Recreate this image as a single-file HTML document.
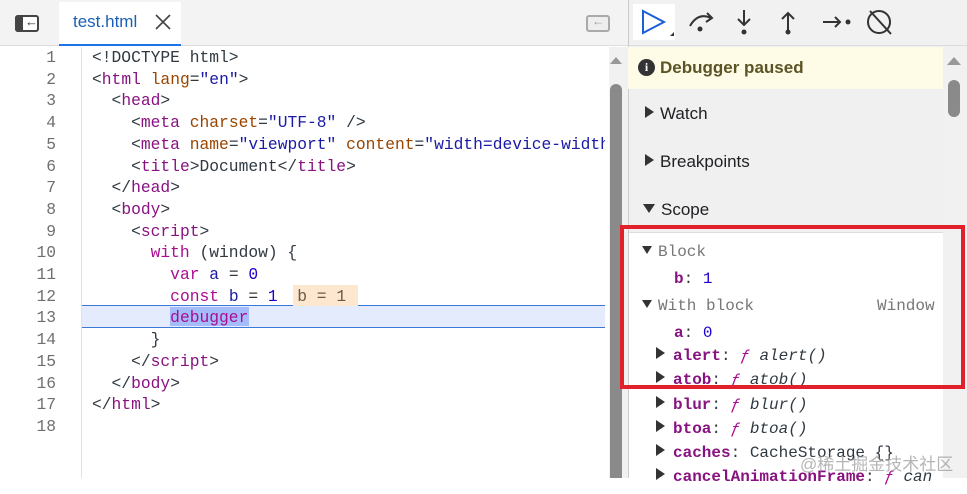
<!DOCTYPE html>
<html><head><style>
*{margin:0;padding:0;box-sizing:border-box}
body{width:967px;height:478px;overflow:hidden;background:#fff;font-family:"Liberation Sans",sans-serif;position:relative}
.abs{position:absolute}
.code{font-family:"Liberation Mono",monospace;font-size:16.3px;white-space:pre;line-height:21.7px;color:#303942}
.ln{position:absolute;left:0;width:56px;text-align:right;color:#6f6f6f}
.t{color:#881280}.a{color:#994500}.s{color:#1a1aa6}.k{color:#aa0d91}.n{color:#1c00cf}
.sec{position:absolute;left:628px;width:315px;font-size:17px;color:#202124}
.tri{display:inline-block;width:0;height:0;border-top:6px solid transparent;border-bottom:6px solid transparent;border-left:9px solid #333;margin-right:6px;vertical-align:1px}
.trd{display:inline-block;width:0;height:0;border-left:6px solid transparent;border-right:6px solid transparent;border-top:9px solid #333;margin-right:6px;vertical-align:2px}
.p{color:#881280;font-weight:bold}
.f{font-style:italic}
</style></head><body>
<div class="abs" style="left:0;top:0;width:628px;height:46px;background:#f3f3f3;border-bottom:1px solid #ddd"></div>
<div class="abs" style="left:15px;top:15px;width:24px;height:17px;border:2px solid #444;border-radius:3px;background:#fff"></div>
<div class="abs" style="left:15px;top:15px;width:8px;height:17px;background:#444;border-radius:3px 0 0 3px"></div>
<div class="abs" style="left:25px;top:14px;font-size:13px;color:#333">←</div>
<div class="abs" style="left:59px;top:2px;width:122px;height:44px;background:#fff;border-bottom:2px solid #1a73e8"></div>
<div class="abs" style="left:73px;top:12px;font-size:17px;color:#1a5fb4">test.html</div>
<svg class="abs" style="left:154px;top:13px" width="18" height="18" stroke="#444" stroke-width="1.6"><path d="M2 2 L16 16 M16 2 L2 16"/></svg>
<div class="abs" style="left:586px;top:15px;width:24px;height:17px;border:2px solid #aaa;border-radius:3px;background:#eee"></div>
<div class="abs" style="left:592px;top:14px;font-size:12px;color:#999">←</div>
<div class="abs" style="left:81px;top:47px;width:1px;height:431px;background:#dde3ea"></div>
<div class="abs" style="left:82px;top:305px;width:523px;height:23px;background:#e3ebfd;border-top:1px solid #3b78d8;border-bottom:1px solid #3b78d8"></div>
<div class="abs" style="left:170px;top:307px;width:79px;height:19px;background:#a4bdfa"></div>
<div class="abs" style="left:293px;top:285px;width:65px;height:21px;background:#fde7cf"></div>
<div class="code abs" style="left:0;top:47px;width:610px">
<div class="ln" style="top:0">1</div><div class="ln" style="top:21.7px">2</div><div class="ln" style="top:43.4px">3</div><div class="ln" style="top:65.1px">4</div><div class="ln" style="top:86.8px">5</div><div class="ln" style="top:108.5px">6</div><div class="ln" style="top:130.2px">7</div><div class="ln" style="top:151.9px">8</div><div class="ln" style="top:173.6px">9</div><div class="ln" style="top:195.3px">10</div><div class="ln" style="top:217px">11</div><div class="ln" style="top:238.7px">12</div><div class="ln" style="top:260.4px">13</div><div class="ln" style="top:282.1px">14</div><div class="ln" style="top:303.8px">15</div><div class="ln" style="top:325.5px">16</div><div class="ln" style="top:347.2px">17</div><div class="ln" style="top:368.9px">18</div>
<div style="position:absolute;left:92px;top:0;width:513px;overflow:hidden">&lt;!DOCTYPE html&gt;
&lt;<span class="t">html</span> <span class="a">lang</span>=<span class="s">"en"</span>&gt;
  &lt;<span class="t">head</span>&gt;
    &lt;<span class="t">meta</span> <span class="a">charset</span>=<span class="s">"UTF-8"</span> /&gt;
    &lt;<span class="t">meta</span> <span class="a">name</span>=<span class="s">"viewport"</span> <span class="a">content</span>=<span class="s">"width=device-width"</span>
    &lt;<span class="t">title</span>&gt;Document&lt;/<span class="t">title</span>&gt;
  &lt;/<span class="t">head</span>&gt;
  &lt;<span class="t">body</span>&gt;
    &lt;<span class="t">script</span>&gt;
      <span class="k">with</span> (window) {
        <span class="k">var</span> <span class="s">a</span> = <span class="n">0</span>
        <span class="k">const</span> <span class="s">b</span> = <span class="n">1</span>  <span style="color:#6b5a4a">b = 1</span>
        <span class="k">debugger</span>
      }
    &lt;/<span class="t">script</span>&gt;
  &lt;/<span class="t">body</span>&gt;
&lt;/<span class="t">html</span>&gt;
</div></div>
<div class="abs" style="left:609px;top:47px;width:19px;height:431px;background:#f1f1f1"></div>
<div class="abs" style="left:610px;top:84px;width:12px;height:394px;background:#8a8a8a;border-radius:6px 6px 0 0"></div>
<div class="abs" style="left:610px;top:57px;width:0;height:0;border-left:6px solid transparent;border-right:6px solid transparent;border-bottom:7px solid #999"></div>
<div class="abs" style="left:628px;top:0;width:339px;height:46px;background:#f1f1f1;border-left:1px solid #ccc;border-bottom:1px solid #ddd"></div>
<div class="abs" style="left:633px;top:4px;width:42px;height:36px;background:#fff"></div>
<svg class="abs" style="left:633px;top:0" width="310" height="46" fill="none" stroke="#333" stroke-width="2">
<path d="M10 11 L31 22 L10 33 Z" stroke="#1a5fd6"/><path d="M37 36 L41 32 L41 36 Z" fill="#333" stroke="none"/>
<path d="M57 26 Q65 12 78 18" /><path d="M74 13 L79 18 L73 22"/><circle cx="67" cy="29" r="2.5" fill="#333" stroke="none"/>
<path d="M111 10 V25 M105 19 L111 25 L117 19"/><circle cx="111" cy="32" r="2.5" fill="#333" stroke="none"/>
<path d="M155 32 V13 M149 19 L155 13 L161 19"/><circle cx="155" cy="32" r="2.5" fill="#333" stroke="none"/>
<path d="M190 22 H207 M202 17 L207 22 L202 27"/><circle cx="215" cy="22" r="2.5" fill="#333" stroke="none"/>
<circle cx="246" cy="22" r="11"/><path d="M237 11 L258 34"/>
</svg>
<div class="abs" style="left:628px;top:46px;width:315px;height:432px;background:#f0f0f0;border-left:1px solid #ccc"></div>
<div class="abs" style="left:628px;top:47px;width:315px;height:42px;background:#fefbe6"></div>
<div class="abs" style="left:638px;top:59px;width:17px;height:17px;border-radius:50%;background:#333;color:#fff;font-size:12px;font-weight:bold;text-align:center;line-height:17px;font-family:'Liberation Serif',serif">i</div>
<div class="abs" style="left:660px;top:58px;font-size:17px;font-weight:bold;color:#5c5326">Debugger paused</div>
<div class="sec" style="top:104px;left:645px"><span class="tri"></span>Watch</div>
<div class="sec" style="top:152px;left:645px"><span class="tri"></span>Breakpoints</div>
<div class="sec" style="top:200px;left:643px"><span class="trd"></span>Scope</div>
<div class="abs" style="left:629px;top:232px;width:314px;height:246px;background:#fff;border-top:1px solid #ddd"></div>
<div class="abs" style="left:943px;top:46px;width:24px;height:432px;background:#f1f1f1"></div>
<div class="abs" style="left:947px;top:57px;width:0;height:0;border-left:7px solid transparent;border-right:7px solid transparent;border-bottom:8px solid #999"></div>
<div class="abs" style="left:948px;top:80px;width:12px;height:37px;background:#8a8a8a;border-radius:6px"></div>
<div class="code abs" style="left:642px;top:242px;font-size:16px;line-height:21px">
<div style="position:absolute;top:0;color:#777"><span class="trd" style="border-left-width:5px;border-right-width:5px;border-top-width:8px"></span>Block</div>
<div style="position:absolute;top:27px;left:32px"><span class="p">b</span>: <span class="n">1</span></div>
<div style="position:absolute;top:54px;color:#777"><span class="trd" style="border-left-width:5px;border-right-width:5px;border-top-width:8px"></span>With block</div>
<div style="position:absolute;top:54px;left:235px;color:#777">Window</div>
<div style="position:absolute;top:81px;left:32px"><span class="p">a</span>: <span class="n">0</span></div>
<div style="position:absolute;top:104px;left:14px"><span class="tri" style="margin-right:8px"></span><span class="p">alert</span>: <span class="k f">ƒ</span> <span class="f">alert()</span></div>
<div style="position:absolute;top:128px;left:14px"><span class="tri" style="margin-right:8px"></span><span class="p">atob</span>: <span class="k f">ƒ</span> <span class="f">atob()</span></div>
<div style="position:absolute;top:153px;left:14px"><span class="tri" style="margin-right:8px"></span><span class="p">blur</span>: <span class="k f">ƒ</span> <span class="f">blur()</span></div>
<div style="position:absolute;top:177px;left:14px"><span class="tri" style="margin-right:8px"></span><span class="p">btoa</span>: <span class="k f">ƒ</span> <span class="f">btoa()</span></div>
<div style="position:absolute;top:201px;left:14px"><span class="tri" style="margin-right:8px"></span><span class="p">caches</span>: CacheStorage {}</div>
<div style="position:absolute;top:225px;left:14px"><span class="tri" style="margin-right:8px"></span><span class="p">cancelAnimationFrame</span>: <span class="k f">ƒ</span> <span class="f">can</span></div>
</div>
<div class="abs" style="left:800px;top:450px;font-size:17px;color:rgba(150,150,150,0.7);font-family:'Liberation Sans','Noto Sans CJK SC',sans-serif">@稀土掘金技术社区</div>
<div class="abs" style="left:620px;top:225px;width:345px;height:164px;border:4px solid #e0202a"></div>
</body></html>
